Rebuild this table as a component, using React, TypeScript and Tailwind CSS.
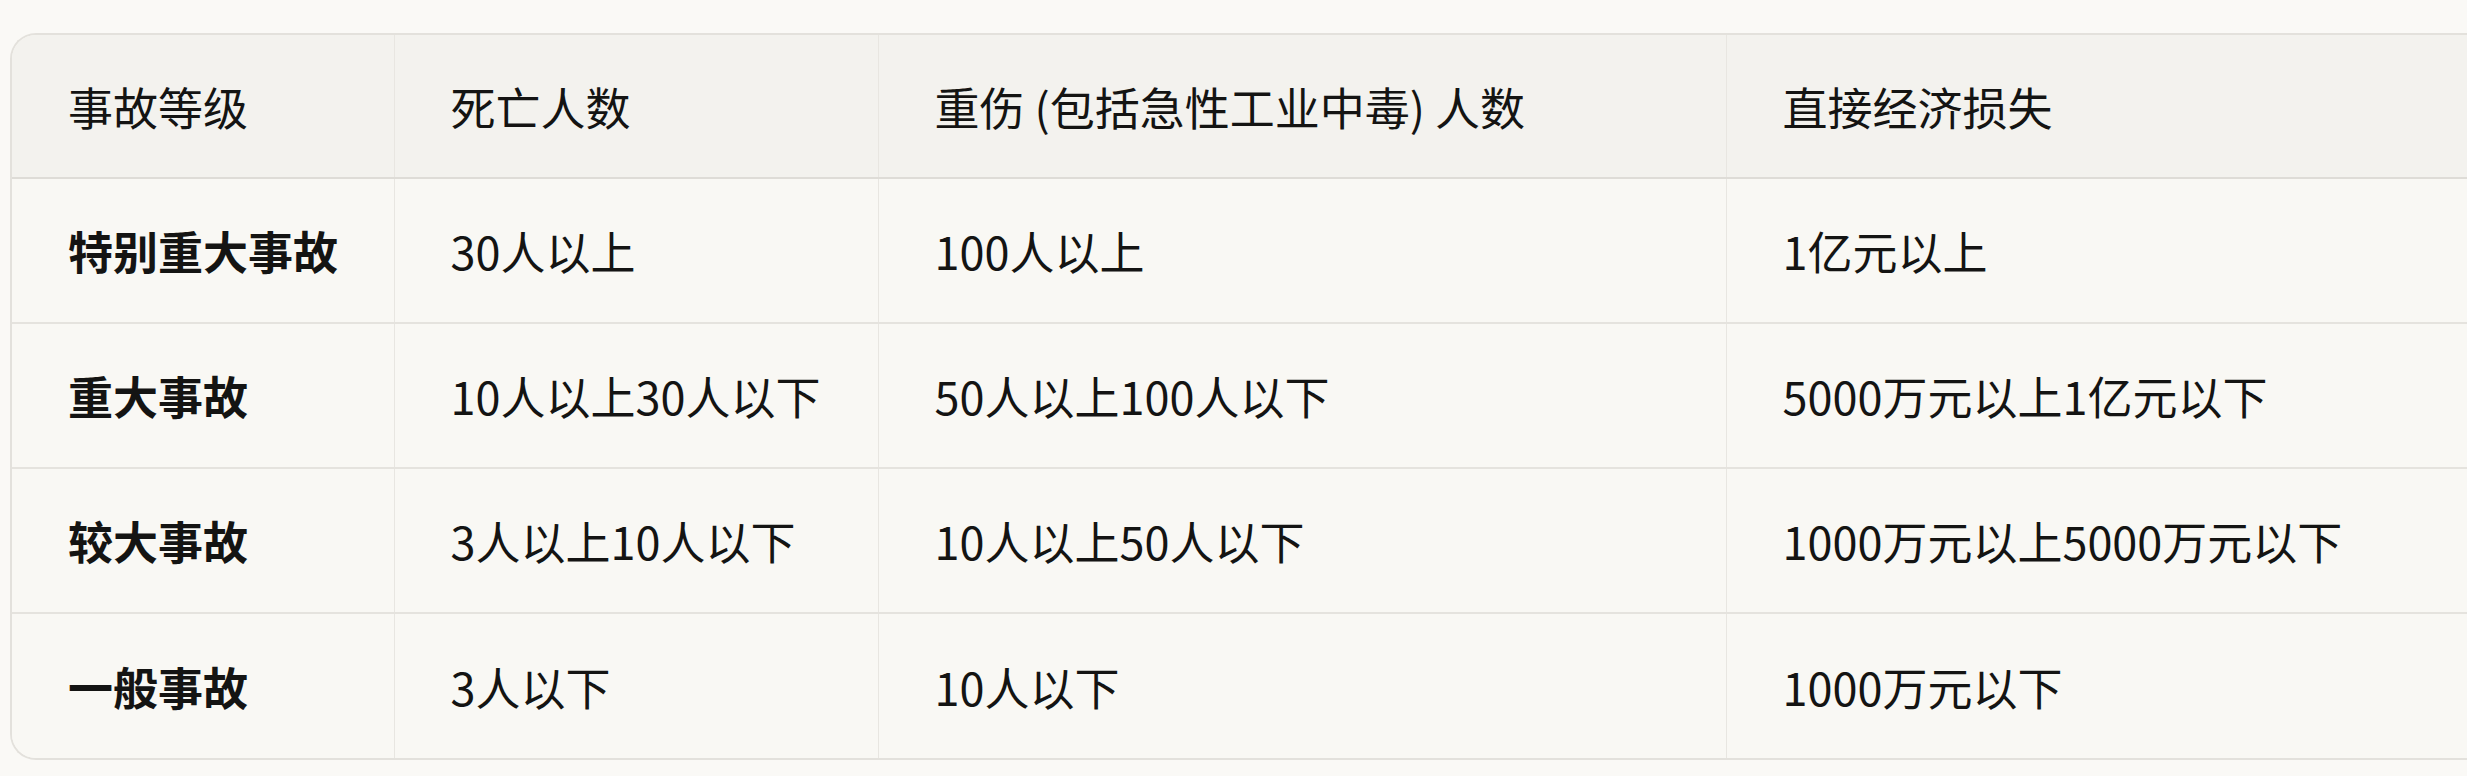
const header = ['事故等级', '死亡人数', '重伤 (包括急性工业中毒) 人数', '直接经济损失'];

const rows = [
  ['特别重大事故', '30人以上', '100人以上', '1亿元以上'],
  ['重大事故', '10人以上30人以下', '50人以上100人以下', '5000万元以上1亿元以下'],
  ['较大事故', '3人以上10人以下', '10人以上50人以下', '1000万元以上5000万元以下'],
  ['一般事故', '3人以下', '10人以下', '1000万元以下'],
];

export default function App() {
  return (
    <div
      className="w-[2467px] h-[776px] overflow-hidden bg-[#faf9f6] pt-[33px] pl-[10px] text-[#141413]"
      style={{ fontFamily: '"Noto Sans CJK SC", "Noto Sans", sans-serif' }}
    >
      <div className="w-[2800px] rounded-l-[26px] border-2 border-r-0 border-[#e3e1dc] overflow-hidden">
        <table className="w-full table-fixed border-collapse text-[45px] leading-none">
          <colgroup>
            <col className="w-[382px]" />
            <col className="w-[484px]" />
            <col className="w-[848px]" />
            <col />
          </colgroup>
          <thead>
            <tr className="h-[143px] bg-[#f3f2ee] border-b-2 border-[#dedcd7]">
              {header.map((h, i) => (
                <th
                  key={h}
                  className={`text-left font-normal pl-[56px] ${i > 0 ? 'border-l border-[#e8e6e1]' : ''}`}
                >
                  {h}
                </th>
              ))}
            </tr>
          </thead>
          <tbody className="bg-[#f9f8f4]">
            {rows.map((r, ri) => (
              <tr key={r[0]} className={`h-[145px] ${ri < rows.length - 1 ? 'border-b-2 border-[#e5e3de]' : ''}`}>
                {r.map((c, i) => (
                  <td
                    key={i}
                    className={`pl-[56px] ${i === 0 ? 'font-bold' : 'border-l border-[#e8e6e1]'}`}
                  >
                    {c}
                  </td>
                ))}
              </tr>
            ))}
          </tbody>
        </table>
      </div>
    </div>
  );
}
